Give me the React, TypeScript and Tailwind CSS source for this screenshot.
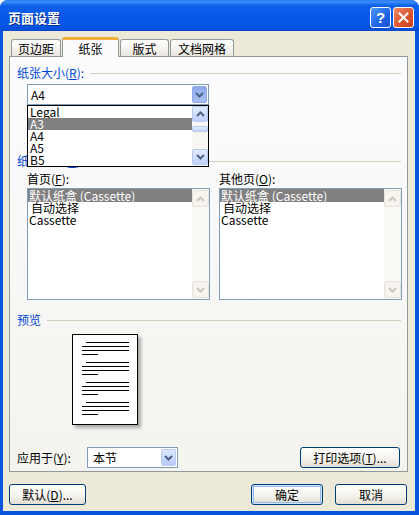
import React from 'react';

const Chevron: React.FC<{ up?: boolean; color?: string }> = ({ up, color = '#4d6185' }) => (
  <svg width="9" height="6" viewBox="0 0 9 6">
    <path d={up ? 'M1 5L4.5 1.5L8 5' : 'M1 1L4.5 4.5L8 1'} fill="none" stroke={color} strokeWidth="2" />
  </svg>
);

const ScrollBtn: React.FC<{ up?: boolean; disabled?: boolean; className?: string }> = ({ up, disabled, className }) => (
  <div
    className={`w-full rounded-[2px] border flex items-center justify-center ${
      disabled ? 'border-[#e6e4da] bg-[#f5f4ef]' : 'border-[#b6c9f3] bg-[linear-gradient(#e3ecfe,#bed1fa)]'
    } ${className ?? ''}`}
  >
    <Chevron up={up} color={disabled ? '#cbc9bd' : '#4d6185'} />
  </div>
);

const ComboArrow: React.FC<{ pressed?: boolean }> = ({ pressed }) => (
  <div
    className={`w-[15px] h-[17px] rounded-[2px] border flex items-center justify-center ${
      pressed ? 'border-[#8ea8e8] bg-[linear-gradient(#8ea9ed,#a9c0f5)]' : 'border-[#b9cbf3] bg-[linear-gradient(#dde7fe,#b8ccf9)]'
    }`}
  >
    <Chevron />
  </div>
);

const GroupHeader: React.FC<{ children: React.ReactNode; className?: string }> = ({ children, className }) => (
  <div className={`flex items-center gap-[6px] pl-[7px] pr-[6px] h-[12px] ${className ?? ''}`}>
    <span className="text-[#0046d5] whitespace-nowrap">{children}</span>
    <div className="flex-1 h-px bg-[#d0d0bf]" />
  </div>
);

const XpButton: React.FC<{ children: React.ReactNode; className?: string; isDefault?: boolean }> = ({ children, className, isDefault }) => (
  <button
    className={`h-[21px] rounded-[3px] border border-[#003c74] bg-[linear-gradient(#ffffff,#f4f3ee_55%,#e2ded3)] text-black text-[12px] leading-[12px] flex items-center justify-center ${
      isDefault ? 'shadow-[inset_0_0_0_1px_#cee7ff,inset_0_0_0_2px_#98b8ea]' : ''
    } ${className ?? ''}`}
  >
    {children}
  </button>
);

const TrayList: React.FC = () => (
  <div className="w-[183px] h-[112px] border border-[#7f9db9] bg-white flex">
    <div className="flex-1 flex flex-col">
      <div className="h-[13px] bg-[#808080] text-white pl-px leading-[13px] whitespace-nowrap">默认纸盒 (Cassette)</div>
      <div className="h-[12px] pl-[3px] leading-[12px]">自动选择</div>
      <div className="h-[12px] pl-px leading-[12px]">Cassette</div>
    </div>
    <div className="w-[17px] bg-[#fbfaf7] flex flex-col justify-between py-px">
      <ScrollBtn up disabled className="h-[17px]" />
      <ScrollBtn disabled className="h-[17px]" />
    </div>
  </div>
);

export default function App() {
  return (
    <div className="w-[419px] h-[515px] bg-white font-['Noto_Sans_CJK_SC','Noto_Sans',sans-serif] text-[12px] leading-[12px] text-black select-none">
      <div className="w-full h-full rounded-t-[8px] overflow-hidden bg-[#0855dd] flex flex-col">
        {/* Title bar */}
        <div className="h-[31px] shrink-0 flex items-center justify-between pl-[8px] pr-[5px] pt-[4px] bg-[linear-gradient(to_bottom,#2a7af5_0%,#3d8ffb_6%,#0f60e9_18%,#0858ea_50%,#0656e6_85%,#0347cf_100%)]">
          <span className="text-white font-bold text-[13px] leading-[14px] [text-shadow:1px_1px_0_#0b2a8a]">页面设置</span>
          <div className="flex gap-[2px]">
            <div className="w-[21px] h-[21px] rounded-[3px] border border-white bg-[linear-gradient(135deg,#4f9aff,#1d62e6_60%,#1a52cf)] flex items-center justify-center text-white font-bold text-[15px] leading-[15px] font-['Liberation_Sans',sans-serif]">
              ?
            </div>
            <div className="w-[21px] h-[21px] rounded-[3px] border border-white bg-[linear-gradient(135deg,#ee8a68,#dd5630_55%,#c8401c)] flex items-center justify-center">
              <svg width="11" height="11" viewBox="0 0 11 11">
                <path d="M1.5 1.5L9.5 9.5M9.5 1.5L1.5 9.5" stroke="white" strokeWidth="2" strokeLinecap="square" />
              </svg>
            </div>
          </div>
        </div>

        {/* Body */}
        <div className="ml-[3px] mr-[4px] mb-[4px] flex-1 bg-[#ece9d8] flex flex-col">
          {/* Tabs */}
          <div className="flex items-end pt-[6px] pl-[8px] gap-[1px] relative z-10">
            <div className="w-[50px] h-[17px] border border-b-0 border-[#919b9c] rounded-t-[3px] bg-[linear-gradient(#ffffff,#f3f2ee_60%,#e7e5dc)] flex items-center justify-center pt-px">页边距</div>
            <div className="w-[57px] h-[20px] -mb-px border border-b-0 border-[#919b9c] border-t-[3px] border-t-[#f4b03a] rounded-t-[3px] bg-[#fcfcfe] flex items-center justify-center">纸张</div>
            <div className="w-[49px] h-[17px] border border-b-0 border-[#919b9c] rounded-t-[3px] bg-[linear-gradient(#ffffff,#f3f2ee_60%,#e7e5dc)] flex items-center justify-center pt-px">版式</div>
            <div className="w-[64px] h-[17px] border border-b-0 border-[#919b9c] rounded-t-[3px] bg-[linear-gradient(#ffffff,#f3f2ee_60%,#e7e5dc)] flex items-center justify-center pt-px">文档网格</div>
          </div>

          {/* Tab panel */}
          <div className="ml-[6px] w-[399px] h-[416px] shrink-0 border border-[#919b9c] bg-[linear-gradient(#fcfcfe,#f4f3ee)] flex flex-col">
            <GroupHeader className="mt-[10px]">
              纸张大小(<u>R</u>):
            </GroupHeader>

            {/* Paper size combo with open dropdown */}
            <div className="ml-[17px] mt-[5px] w-[182px] relative z-20">
              <div className="h-[21px] border border-[#7f9db9] bg-white flex items-center justify-between pl-[3px] pr-px">
                <span>A4</span>
                <ComboArrow pressed />
              </div>
              <div className="absolute left-0 top-[21px] w-[182px] h-[62px] border border-black bg-white flex">
                <div className="flex-1 flex flex-col">
                  <div className="h-[12px] pl-[2px]">Legal</div>
                  <div className="h-[12px] pl-[2px] bg-[#808080] text-white">A3</div>
                  <div className="h-[12px] pl-[2px]">A4</div>
                  <div className="h-[12px] pl-[2px]">A5</div>
                  <div className="h-[12px] pl-[2px]">B5</div>
                </div>
                <div className="w-[16px] bg-[#f7f6f1] flex flex-col">
                  <ScrollBtn up className="h-[16px]" />
                  <div className="mt-[4px] h-[6px] rounded-[2px] border border-[#b6c9f3] bg-[linear-gradient(#e3ecfe,#c6d7fb)]" />
                  <div className="flex-1" />
                  <ScrollBtn className="h-[16px] mb-px" />
                </div>
              </div>
            </div>

            <GroupHeader className="mt-[50px]">
              纸张来源(<u>S</u>):
            </GroupHeader>

            <div className="ml-[17px] mt-[6px] flex gap-[9px]">
              <div className="flex flex-col">
                <div className="h-[12px]">首页(<u>F</u>):</div>
                <div className="mt-[3px]">
                  <TrayList />
                </div>
              </div>
              <div className="flex flex-col">
                <div className="h-[12px]">其他页(<u>O</u>):</div>
                <div className="mt-[3px]">
                  <TrayList />
                </div>
              </div>
            </div>

            <GroupHeader className="mt-[14px]">预览</GroupHeader>

            {/* Preview page */}
            <div className="ml-[62px] mt-[8px] w-[66px] h-[91px] bg-white border border-black shadow-[3px_3px_3px_rgba(0,0,0,0.3)] pt-[7px] pl-[9px] flex flex-col gap-[7px]">
              {[0, 1, 2, 3].map(i => (
                <div key={i} className="flex flex-col gap-[3px]">
                  <div className="ml-[4px] w-[43px] h-px bg-black" />
                  <div className="w-[47px] h-px bg-black" />
                  <div className="w-[47px] h-px bg-black" />
                  <div className="w-[16px] h-px bg-black" />
                </div>
              ))}
            </div>

            {/* Apply to row */}
            <div className="mt-[22px] h-[21px] flex items-center justify-between pl-[7px] pr-[7px]">
              <div className="flex items-center">
                <span className="w-[70px]">应用于(<u>Y</u>):</span>
                <div className="w-[91px] h-[21px] border border-[#7f9db9] bg-white flex items-center justify-between pl-[5px] pr-px">
                  <span>本节</span>
                  <ComboArrow />
                </div>
              </div>
              <XpButton className="w-[100px] h-[20px]">打印选项(<u>T</u>)...</XpButton>
            </div>
          </div>

          {/* Dialog buttons */}
          <div className="mt-[12px] flex justify-between pl-[6px] pr-[8px]">
            <XpButton className="w-[77px]">默认(<u>D</u>)...</XpButton>
            <div className="flex gap-[12px]">
              <XpButton className="w-[72px]" isDefault>
                确定
              </XpButton>
              <XpButton className="w-[72px]">取消</XpButton>
            </div>
          </div>
        </div>
      </div>
    </div>
  );
}
